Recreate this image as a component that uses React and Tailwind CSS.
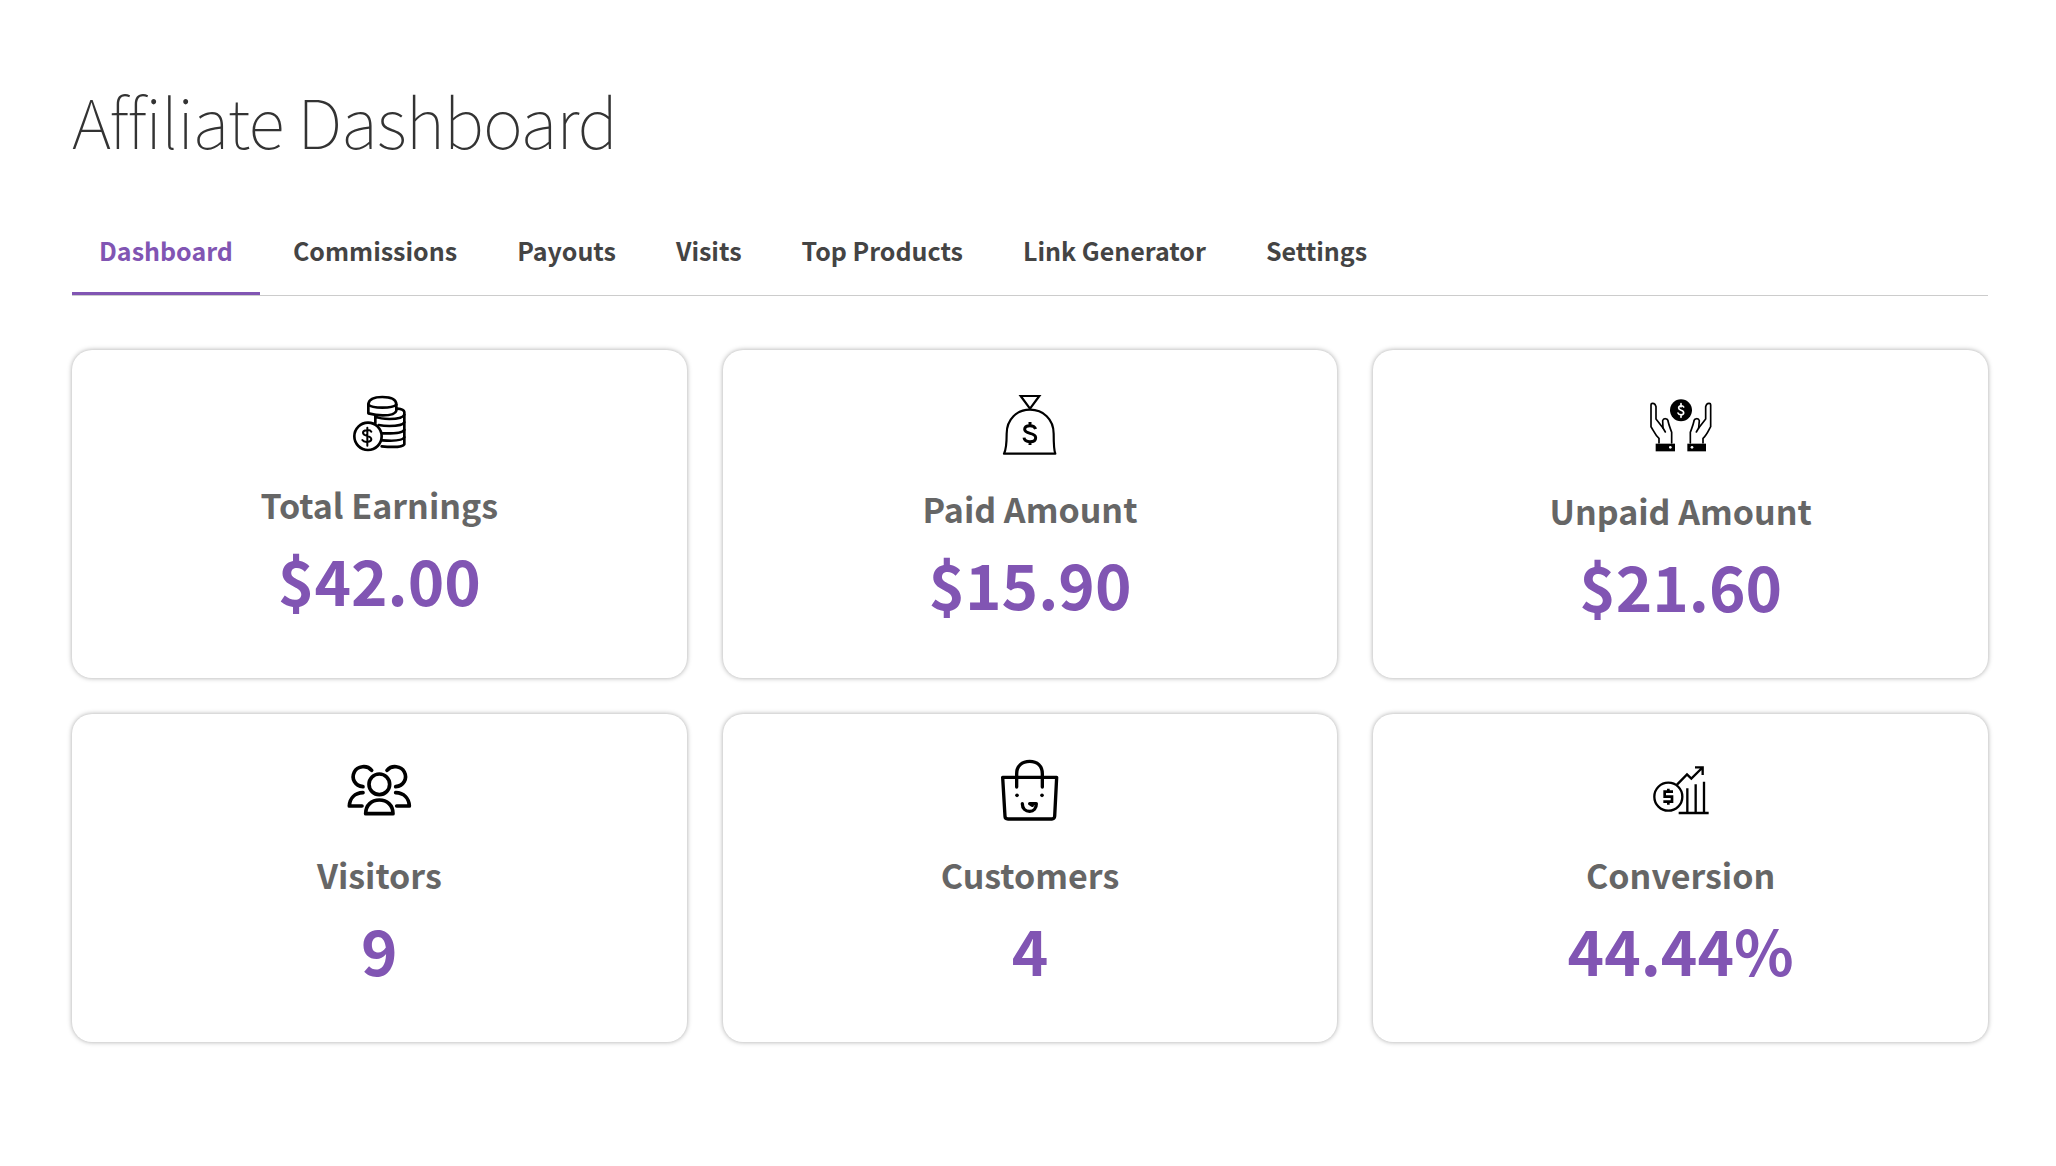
const INK = "#000";

function CoinsIcon() {
  return (
    <svg viewBox="-3 0 240 234" className="h-[78px] w-20" fill="none" stroke={INK} strokeWidth="8" strokeLinecap="round" strokeLinejoin="round" aria-hidden="true">
      <path d="M85 72c2-14 20-21 42-21 26 0 42 7 42 22v19c-2 9-18 14-41 14-18 0-31-3-43-6z" />
      <path d="M85 74c6 6 22 9 42 9s36-3 42-9" />
      <path d="M172 86c10 1 20 4 21 10v97c-4 7-30 10-68 6" />
      <path d="M106 108v22M193 104c-3 9-22 13-45 13-18 0-33-3-41-7" />
      <path d="M193 127c-3 8-22 11-45 11-12 0-22-1-32-3M193 149c-3 8-20 12-65 11M193 172c-4 9-24 12-66 9" />
      <circle cx="84" cy="169" r="41" />
      <path d="M82 143v54M94 155c-4-7-25-6-25 3 0 12 25 7 25 20 0 9-22 11-27 2" strokeWidth="6" />
    </svg>
  );
}

function MoneyBagIcon() {
  return (
    <svg viewBox="0 0 240 246" className="h-[82px] w-20" fill="none" stroke={INK} strokeWidth="6.5" aria-hidden="true">
      <path d="M92 48h56l-28 38z" />
      <path d="M42 221h154c-5-12-5-24-5-60 0-44-32-72-71-72s-70 28-70 72c0 36-2 48-8 60z" strokeLinejoin="round" />
      <path d="M137 147c-3-8-9-10-17-10-9 0-16 4-16 11 0 17 33 7 33 25 0 9-8 12-17 12-9 0-17-4-18-12M120 126v10M120 184v11" strokeWidth="9" />
    </svg>
  );
}

function HandsIcon() {
  return (
    <svg viewBox="2 0 240 252" className="h-[84px] w-20" fill="none" stroke={INK} strokeWidth="5" strokeLinejoin="round" strokeLinecap="round" aria-hidden="true">
      <circle cx="122" cy="91" r="33" fill={INK} stroke="none" />
      <path d="M130 81c-2-5-15-6-15 3 0 9 15 4 15 14 0 8-14 8-17 1M122 71v9M122 104v8" stroke="#fff" strokeWidth="5" />
      <g>
        <path d="M56 189v-14c-12-10-17-25-24-35V74c0-5 8-5 12-1l3 7v37l21 27" />
        <path d="M94 189v-32c-4-12-8-20-11-34-1-9-14-9-16-1l1 22 7 12" />
        <path d="M46 191h58v23H46z" fill={INK} stroke="none" />
        <circle cx="90" cy="202" r="4" fill="#fff" stroke="none" />
      </g>
      <g>
        <path d="M188 189v-14c12-10 17-25 23-35V74c0-5-8-5-12-1l-3 7v37l-21 27" />
        <path d="M150 189v-32c4-12 8-20 11-34 1-9 14-9 16-1l-2 22-7 12" />
        <path d="M141 191h56v23h-56z" fill={INK} stroke="none" />
        <circle cx="155" cy="202" r="4" fill="#fff" stroke="none" />
      </g>
    </svg>
  );
}

function VisitorsIcon() {
  return (
    <svg viewBox="-2 -21 240 252" className="h-[84px] w-20" fill="none" stroke={INK} strokeWidth="11" strokeLinecap="round" strokeLinejoin="round" aria-hidden="true">
      <circle cx="119" cy="100" r="31" />
      <path d="M96 58c-14-17-43-13-52 5-10 20 2 41 26 44" />
      <path d="M142 58c14-17 43-13 52 5 10 20-2 41-26 44" />
      <path d="M78 188h82c0-26-18-41-41-41s-41 15-41 41z" />
      <path d="M70 125c-24 1-40 16-41 40h38M168 125c24 1 40 16 41 40h-38" />
    </svg>
  );
}

function BagIcon() {
  return (
    <svg viewBox="0 -21 240 252" className="h-[84px] w-20" fill="none" stroke={INK} strokeWidth="10" strokeLinecap="round" strokeLinejoin="round" aria-hidden="true">
      <path d="M38 79h162l-6 117c0 5-4 8-8 8H54c-5 0-9-3-9-8z" />
      <path d="M80 108V68c0-23 16-37 39-37s38 14 38 37v40" />
      <path d="M97 158c0 15 10 23 22 23s20-9 20-23h-20l8 5" />
      <circle cx="81" cy="133" r="5.5" fill={INK} stroke="none" />
      <circle cx="156" cy="133" r="5.5" fill={INK} stroke="none" />
    </svg>
  );
}

function ConversionIcon() {
  return (
    <svg viewBox="2 -21 240 252" className="h-[84px] w-20" fill="none" stroke={INK} strokeWidth="7" aria-hidden="true">
      <circle cx="84" cy="137" r="42" />
      <path d="M98 122H73v15h22v15H69M84 113v9M84 152v9" strokeWidth="8" />
      <path d="M110 101l30-31 13 13 32-32M164 49h23v23" />
      <path d="M141 186v-74M166 186v-86M191 186V92M115 186h90" />
    </svg>
  );
}

const TABS = ["Dashboard", "Commissions", "Payouts", "Visits", "Top Products", "Link Generator", "Settings"];

const STATS = [
  { label: "Total Earnings", value: "$42.00", Icon: CoinsIcon },
  { label: "Paid Amount", value: "$15.90", Icon: MoneyBagIcon },
  { label: "Unpaid Amount", value: "$21.60", Icon: HandsIcon },
  { label: "Visitors", value: "9", Icon: VisitorsIcon },
  { label: "Customers", value: "4", Icon: BagIcon },
  { label: "Conversion", value: "44.44%", Icon: ConversionIcon },
];

function StatCard({ label, value, Icon }) {
  return (
    <section className="flex flex-col items-center rounded-[20px] bg-white px-6 pt-[30px] pb-14 shadow-[0_0_5px_rgba(0,0,0,0.35)]">
      <Icon />
      <h2 className="mt-[25px] text-[34px] leading-[44px] font-bold text-[#666]">{label}</h2>
      <p className="mt-[15px] text-[62px] leading-[74px] font-bold text-[#8155b3]">{value}</p>
    </section>
  );
}

export default function App() {
  return (
    <main className="min-h-screen bg-white pr-[68px] pl-[72px] pt-[72px] pb-16 font-['Source_Sans_Pro','Noto_Sans_CJK_SC',sans-serif]">
      <h1 className="text-[68px] leading-[96px] font-thin tracking-[-1px] text-[#333]">Affiliate Dashboard</h1>
      <nav className="mt-[42px] flex gap-1.5 border-b border-[#ccc]">
        {TABS.map((tab, i) => (
          <button
            key={tab}
            type="button"
            className={
              i === 0
                ? "border-b-[3px] border-[#8155b3] px-[27px] pt-[21px] pb-[23px] text-[25px] leading-[38px] font-bold text-[#8155b3]"
                : "border-b-[3px] border-transparent px-[27px] pt-[21px] pb-[23px] text-[25px] leading-[38px] font-bold text-[#444]"
            }
          >
            {tab}
          </button>
        ))}
      </nav>
      <div className="mt-[54px] grid grid-cols-3 gap-9">
        {STATS.map((s) => (
          <StatCard key={s.label} {...s} />
        ))}
      </div>
    </main>
  );
}
